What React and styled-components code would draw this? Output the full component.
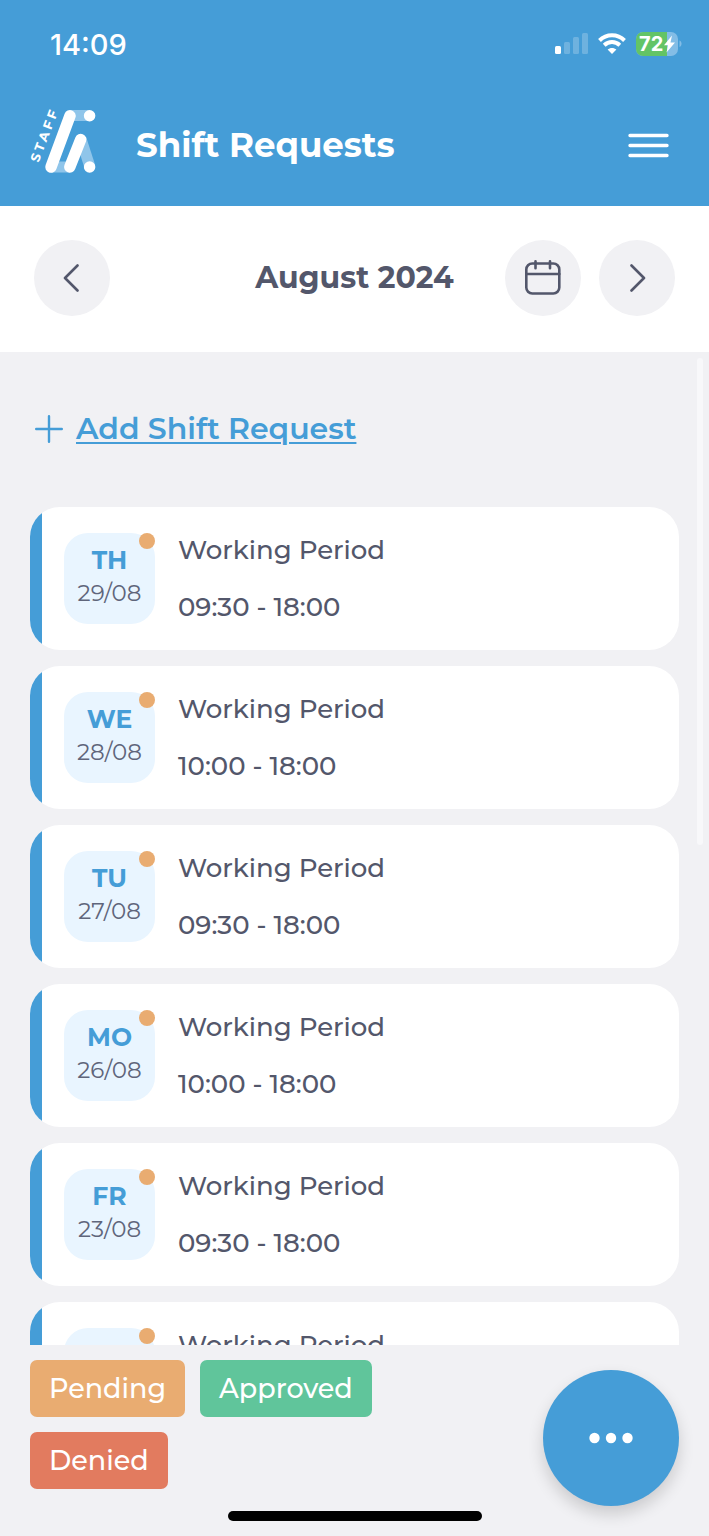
import React, { useState } from 'react';
import styled, { createGlobalStyle } from 'styled-components';

const COLORS = {
  primary: '#459dd7',
  text: '#53576b',
  lightText: '#5f657b',
  background: '#f1f1f4',
  badge: '#e9f5ff',
  pending: '#e9ac71',
  approved: '#60c59b',
  denied: '#e27b5f'
};

const GlobalStyle = createGlobalStyle`
  * {
    box-sizing: border-box;
  }
  body {
    margin: 0;
    color: ${COLORS.text};
    background-color: ${COLORS.background};
    font-family: Montserrat, Inter, sans-serif;
  }
  button {
    padding: 0;
    border: 0;
    font-family: inherit;
    cursor: pointer;
  }
  svg {
    display: block;
  }
`;

const Page = styled.div`
  display: flex;
  flex-direction: column;
  height: 100vh;
`;

const Header = styled.header`
  color: #fff;
  background-color: ${COLORS.primary};
`;
const StatusBar = styled.div`
  display: flex;
  align-items: center;
  justify-content: space-between;
  height: 84px;
  padding: 4px 27px 0 50px;
  font-family: Inter, sans-serif;
`;
const Clock = styled.span`
  font-size: 29px;
  font-weight: 500;
`;
const StatusIcons = styled.div`
  display: flex;
  align-items: center;
  gap: 10px;
`;
const TitleBar = styled.div`
  display: flex;
  align-items: center;
  height: 122px;
  padding: 0 40px 0 24px;
`;
const Title = styled.h1`
  flex: 1;
  margin: 0 0 0 38px;
  font-size: 34px;
  font-weight: 700;
`;
const MenuBtn = styled.button`
  color: #fff;
  background: none;
`;

const MonthBar = styled.nav`
  display: grid;
  grid-template-columns: 1fr auto 1fr;
  align-items: center;
  height: 146px;
  padding: 0 34px 2px;
  background-color: #fff;
`;
const Month = styled.h2`
  margin: 0;
  padding-bottom: 2px;
  font-size: 30px;
  font-weight: 700;
`;
const MonthActions = styled.div`
  display: flex;
  gap: 18px;
  justify-content: ${props => (props.$end ? 'flex-end' : 'flex-start')};
`;
const RoundBtn = styled.button`
  display: flex;
  align-items: center;
  justify-content: center;
  width: 76px;
  height: 76px;
  color: ${COLORS.text};
  background-color: ${COLORS.background};
  border-radius: 50%;
`;

const ListArea = styled.main`
  position: relative;
  flex: 1;
  min-height: 0;
`;
const Scroller = styled.div`
  height: 100%;
  padding: 0 30px;
  overflow-y: auto;
  scrollbar-width: none;
`;
const ScrollThumb = styled.div`
  position: absolute;
  top: 6px;
  right: 6px;
  width: 6px;
  height: 49%;
  background-color: #f8f8fa;
  border-radius: 3px;
`;
const AddLink = styled.a`
  display: flex;
  align-items: center;
  gap: 13px;
  height: 155px;
  padding: 0 0 2px 5px;
  color: ${COLORS.primary};
  font-size: 30px;
  font-weight: 600;
  text-decoration: none;
  span {
    text-decoration: underline;
    text-decoration-thickness: 2px;
    text-underline-offset: 3px;
  }
`;

const List = styled.ul`
  display: flex;
  flex-direction: column;
  gap: 16px;
  margin: 0;
  padding: 0;
  list-style: none;
`;
const Card = styled.li`
  display: flex;
  flex-shrink: 0;
  height: 143px;
  background-color: #fff;
  border-radius: 30px;
  overflow: hidden;
`;
const CardStripe = styled.div`
  width: 12px;
  background-color: ${COLORS.primary};
`;
const CardBody = styled.div`
  display: flex;
  align-items: center;
  gap: 23px;
  padding: 0 22px;
`;
const DateBadge = styled.div`
  position: relative;
  display: flex;
  flex-direction: column;
  align-items: center;
  justify-content: center;
  width: 91px;
  height: 91px;
  padding-bottom: 3px;
  background-color: ${COLORS.badge};
  border-radius: 24px;
`;
const Day = styled.strong`
  color: ${COLORS.primary};
  font-size: 25px;
  font-weight: 700;
  line-height: 33px;
`;
const DayDate = styled.span`
  color: ${COLORS.lightText};
  font-size: 23px;
  line-height: 33px;
`;
const StatusDot = styled.span`
  position: absolute;
  top: 0;
  right: 0;
  width: 16px;
  height: 16px;
  background-color: ${props => COLORS[props.$status]};
  border-radius: 50%;
`;
const Details = styled.div`
  font-size: 26px;
  font-weight: 500;
  line-height: 57px;
`;

const Footer = styled.footer`
  padding: 15px 30px;
`;
const FooterRow = styled.div`
  display: flex;
  align-items: flex-start;
  justify-content: space-between;
  gap: 32px;
`;
const Legend = styled.div`
  display: flex;
  flex: 1;
  flex-wrap: wrap;
  gap: 15px;
  max-width: 400px;
`;
const Tag = styled.span`
  padding: 0 19px;
  color: #fff;
  font-size: 27px;
  font-weight: 500;
  line-height: 57px;
  background-color: ${props => COLORS[props.$status]};
  border-radius: 7px;
`;
const MoreBtn = styled.button`
  display: flex;
  align-items: center;
  justify-content: center;
  width: 136px;
  height: 136px;
  margin-top: 10px;
  color: #fff;
  background-color: ${COLORS.primary};
  border-radius: 50%;
  box-shadow: 0 8px 16px rgba(0, 0, 0, 0.16);
`;
const HomeIndicator = styled.div`
  width: 254px;
  height: 10px;
  margin: 5px auto 0;
  background-color: #000;
  border-radius: 5px;
`;

const Logo = () => (
  <svg width="74" height="80" viewBox="-6 0 74 80" fill="none">
    <g stroke="#8fc5ea" strokeWidth="11">
      <path d="M40 10.5H59.5M21 62H40" />
      <path d="M51 34L60 62" />
    </g>
    <g stroke="#fff" strokeWidth="11.5" strokeLinecap="round">
      <path d="M40 10.8L21 62" />
      <path d="M50.7 34.5L39.8 62" />
      <path d="M59.6 10.8h.01M59.6 62h.01" />
    </g>
    <text
      transform="translate(8.5 58) rotate(-69)"
      fill="#fff"
      fontSize="13"
      fontWeight="700"
      letterSpacing="3"
    >
      STAFF
    </text>
  </svg>
);

const Signal = () => (
  <svg width="33" height="22" viewBox="0 0 33 22" fill="#fff">
    <rect y="13" width="6" height="8" rx="1.5" />
    <g opacity="0.22">
      <rect x="9" y="9" width="6" height="12" rx="1.5" />
      <rect x="18" y="4" width="6" height="17" rx="1.5" />
      <rect x="27" y="0" width="6" height="21" rx="1.5" />
    </g>
  </svg>
);

const Wifi = () => (
  <svg width="28" height="22" viewBox="0 0 28 22" fill="none">
    <path d="M1.5 7.5C8.5 .6 19.5 .6 26.5 7.5" stroke="#fff" strokeWidth="4" />
    <path d="M6.2 12.2C10.6 8 17.4 8 21.8 12.2" stroke="#fff" strokeWidth="4" />
    <path d="M14 21L9.6 16.6C12 14.4 16 14.4 18.4 16.6Z" fill="#fff" />
  </svg>
);

const Battery = () => (
  <svg width="46" height="24" viewBox="0 0 46 24">
    <rect width="42" height="24" rx="7" fill="#83bde6" />
    <path d="M7 0H31V24H7A7 7 0 0 1 0 17V7A7 7 0 0 1 7 0Z" fill="#63c466" />
    <path d="M43.5 8.5C46.2 9.5 46.2 14 43.5 15Z" fill="#83bde6" />
    <text x="3" y="19" fill="#fff" fontSize="20" fontWeight="700">72</text>
    <path d="M36 3.5L28 13.2H32L30.5 20.5L39 10.5H34.5Z" fill="#fff" />
  </svg>
);

const Chevron = ({ d }) => (
  <svg width="28" height="28" viewBox="0 0 28 28" fill="none" stroke="currentColor" strokeWidth="2.6" strokeLinecap="round" strokeLinejoin="round">
    <path d={d} />
  </svg>
);

const CalendarIcon = () => (
  <svg width="36" height="36" viewBox="0 0 36 36" fill="none" stroke="currentColor" strokeWidth="2.6" strokeLinecap="round">
    <rect x="1.3" y="3.5" width="33" height="30" rx="6" />
    <path d="M1.3 14H34.3M10.5 1.3V8.3M25 1.3V8.3" />
  </svg>
);

const requests = [
  { id: 1, day: 'TH', date: '29/08', time: '09:30 - 18:00', status: 'pending' },
  { id: 2, day: 'WE', date: '28/08', time: '10:00 - 18:00', status: 'pending' },
  { id: 3, day: 'TU', date: '27/08', time: '09:30 - 18:00', status: 'pending' },
  { id: 4, day: 'MO', date: '26/08', time: '10:00 - 18:00', status: 'pending' },
  { id: 5, day: 'FR', date: '23/08', time: '09:30 - 18:00', status: 'pending' },
  { id: 6, day: 'TH', date: '22/08', time: '10:00 - 18:00', status: 'pending' }
];

const MONTHS = [
  'January', 'February', 'March', 'April', 'May', 'June', 'July',
  'August', 'September', 'October', 'November', 'December'
];

const RequestCard = ({ request }) => (
  <Card>
    <CardStripe />
    <CardBody>
      <DateBadge>
        <Day>{request.day}</Day>
        <DayDate>{request.date}</DayDate>
        <StatusDot $status={request.status} />
      </DateBadge>
      <Details>
        <div>Working Period</div>
        <div>{request.time}</div>
      </Details>
    </CardBody>
  </Card>
);

const App = () => {
  // months counted from year 0
  const [month, setMonth] = useState(2024 * 12 + 7);

  return (
    <Page>
      <GlobalStyle />
      <Header>
        <StatusBar>
          <Clock>14:09</Clock>
          <StatusIcons>
            <Signal />
            <Wifi />
            <Battery />
          </StatusIcons>
        </StatusBar>
        <TitleBar>
          <Logo />
          <Title>Shift Requests</Title>
          <MenuBtn aria-label="Menu">
            <svg width="41" height="26" viewBox="0 0 41 26" stroke="currentColor" strokeWidth="3.4" strokeLinecap="round">
              <path d="M2 3.5H39M2 13.5H39M2 23.5H39" />
            </svg>
          </MenuBtn>
        </TitleBar>
      </Header>
      <MonthBar>
        <MonthActions>
          <RoundBtn aria-label="Previous month" onClick={() => setMonth(month - 1)}>
            <Chevron d="M19.5 1.5L7 14L19.5 26.5" />
          </RoundBtn>
        </MonthActions>
        <Month>{MONTHS[month % 12]} {Math.floor(month / 12)}</Month>
        <MonthActions $end>
          <RoundBtn aria-label="Pick a month">
            <CalendarIcon />
          </RoundBtn>
          <RoundBtn aria-label="Next month" onClick={() => setMonth(month + 1)}>
            <Chevron d="M8.5 1.5L21 14L8.5 26.5" />
          </RoundBtn>
        </MonthActions>
      </MonthBar>
      <ListArea>
        <Scroller>
          <AddLink href="#add">
            <svg width="28" height="28" viewBox="0 0 28 28" stroke="currentColor" strokeWidth="2.4" strokeLinecap="round">
              <path d="M14 1.2V26.8M1.2 14H26.8" />
            </svg>
            <span>Add Shift Request</span>
          </AddLink>
          <List>
            {requests.map(request => (
              <RequestCard key={request.id} request={request} />
            ))}
          </List>
        </Scroller>
        <ScrollThumb />
      </ListArea>
      <Footer>
        <FooterRow>
          <Legend>
            <Tag $status="pending">Pending</Tag>
            <Tag $status="approved">Approved</Tag>
            <Tag $status="denied">Denied</Tag>
          </Legend>
          <MoreBtn aria-label="More">
            <svg width="44" height="12" viewBox="0 0 44 12" fill="currentColor">
              <circle cx="5.5" cy="6" r="5.2" />
              <circle cx="22" cy="6" r="5.2" />
              <circle cx="38.5" cy="6" r="5.2" />
            </svg>
          </MoreBtn>
        </FooterRow>
        <HomeIndicator />
      </Footer>
    </Page>
  );
};

export default App;
